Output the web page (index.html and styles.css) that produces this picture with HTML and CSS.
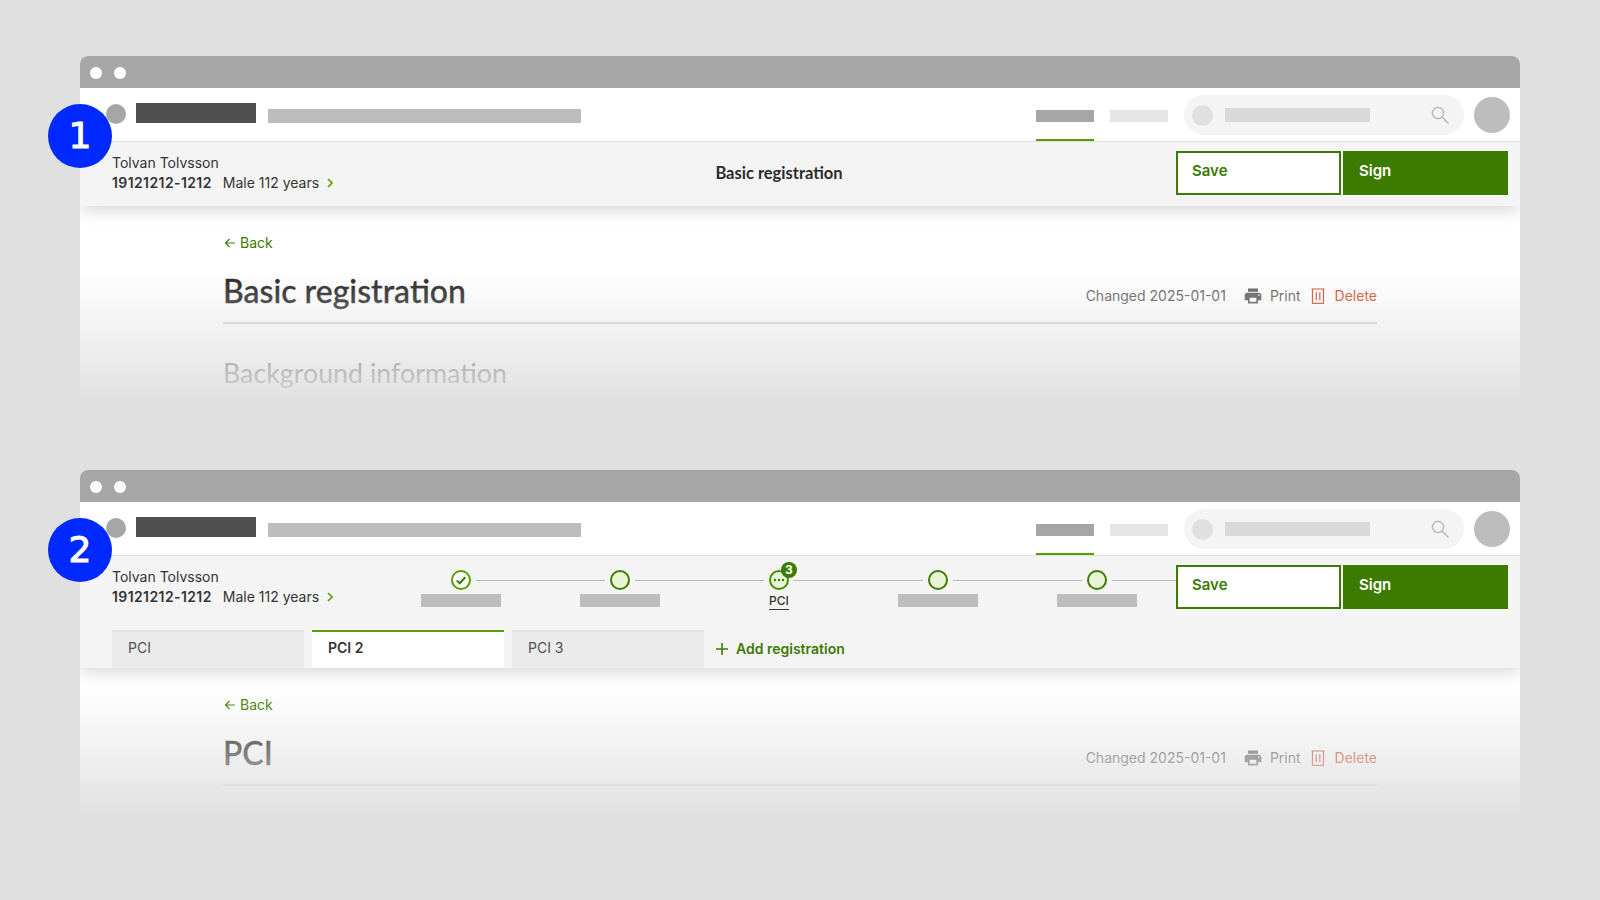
FILE: index.html
```html
<!DOCTYPE html>
<html lang="en">
<head>
    <meta charset="UTF-8">
    <title>Registration header variants</title>
    <link rel="stylesheet" href="styles.css">
</head>
<body>
    <!-- Variant 1: simple registration -->
    <section class="window">
        <div class="number">1</div>
        <div class="titlebar"><span class="dot"></span><span class="dot"></span></div>
        <nav class="nav">
            <div class="nav-left">
                <span class="nav-circle"></span>
                <span class="nav-logo"></span>
                <span class="nav-product"></span>
            </div>
            <div class="nav-right">
                <div class="nav-tab active"><span></span></div>
                <div class="nav-tab"><span></span></div>
                <div class="search">
                    <span class="search-circle"></span>
                    <span class="search-bar"></span>
                    <svg class="search-icon" viewBox="0 0 20 20" width="20" height="20"><circle cx="8" cy="8" r="5.6"/><path d="M12 12l6.5 6.5"/></svg>
                </div>
                <span class="avatar"></span>
            </div>
        </nav>
        <header class="bar">
            <div class="row">
                <div class="patient">
                    <div>Tolvan Tolvsson</div>
                    <div class="patient-line">
                        <strong>19121212-1212</strong>
                        <span>Male 112 years</span>
                        <svg class="chevron" viewBox="0 0 6 10" width="6" height="10"><path d="M1 1l4 4-4 4"/></svg>
                    </div>
                </div>
                <div class="bar-main"><div class="bar-title">Basic registration</div></div>
                <div class="actions">
                    <button class="btn btn-save">Save</button>
                    <button class="btn btn-sign">Sign</button>
                </div>
            </div>
        </header>
        <main class="content">
            <a class="back"><svg viewBox="0 0 12 12" width="12" height="12"><path d="M11 6H1.5M5.5 2L1.5 6l4 4"/></svg>Back</a>
            <div class="page-head">
                <h1>Basic registration</h1>
                <div class="meta">
                    <span class="changed">Changed 2025-01-01</span>
                    <a class="print"><svg viewBox="0 0 24 24" width="20" height="20"><path d="M19 8H5c-1.66 0-3 1.34-3 3v6h4v4h12v-4h4v-6c0-1.66-1.34-3-3-3zm-3 11H8v-5h8v5zm3-7c-.55 0-1-.45-1-1s.45-1 1-1 1 .45 1 1-.45 1-1 1zm-1-9H6v4h12V3z"/></svg>Print</a>
                    <a class="delete"><svg viewBox="0 0 14 16" width="14" height="16"><path d="M.5 1h13M1.5 1h11v14.3h-11zM5.2 4.2v8M8.8 4.2v8"/></svg>Delete</a>
                </div>
            </div>
            <h2>Background information</h2>
            <div class="fade fade-tall"></div>
        </main>
    </section>

    <!-- Variant 2: stepper and tabs -->
    <section class="window">
        <div class="number">2</div>
        <div class="titlebar"><span class="dot"></span><span class="dot"></span></div>
        <nav class="nav">
            <div class="nav-left">
                <span class="nav-circle"></span>
                <span class="nav-logo"></span>
                <span class="nav-product"></span>
            </div>
            <div class="nav-right">
                <div class="nav-tab active"><span></span></div>
                <div class="nav-tab"><span></span></div>
                <div class="search">
                    <span class="search-circle"></span>
                    <span class="search-bar"></span>
                    <svg class="search-icon" viewBox="0 0 20 20" width="20" height="20"><circle cx="8" cy="8" r="5.6"/><path d="M12 12l6.5 6.5"/></svg>
                </div>
                <span class="avatar"></span>
            </div>
        </nav>
        <header class="bar">
            <div class="row">
                <div class="patient">
                    <div>Tolvan Tolvsson</div>
                    <div class="patient-line">
                        <strong>19121212-1212</strong>
                        <span>Male 112 years</span>
                        <svg class="chevron" viewBox="0 0 6 10" width="6" height="10"><path d="M1 1l4 4-4 4"/></svg>
                    </div>
                </div>
                <div class="bar-main stepper">
                    <div class="step">
                        <svg class="step-icon" viewBox="0 0 20 20" width="20" height="20"><circle class="ring-done" cx="10" cy="10" r="9"/><path class="tick" d="M5.8 10.4l2.9 2.9 5.6-6"/></svg>
                        <span class="step-bar"></span>
                    </div>
                    <div class="step">
                        <svg class="step-icon" viewBox="0 0 20 20" width="20" height="20"><circle class="ring" cx="10" cy="10" r="9"/></svg>
                        <span class="step-bar"></span>
                    </div>
                    <div class="step">
                        <svg class="step-icon" viewBox="0 0 20 20" width="20" height="20"><circle class="ring-current" cx="10" cy="10" r="9"/><circle class="pip" cx="6" cy="10" r="1.2"/><circle class="pip" cx="10" cy="10" r="1.2"/><circle class="pip" cx="14" cy="10" r="1.2"/></svg>
                        <span class="step-count">3</span>
                        <span class="step-label">PCI</span>
                    </div>
                    <div class="step">
                        <svg class="step-icon" viewBox="0 0 20 20" width="20" height="20"><circle class="ring" cx="10" cy="10" r="9"/></svg>
                        <span class="step-bar"></span>
                    </div>
                    <div class="step">
                        <svg class="step-icon" viewBox="0 0 20 20" width="20" height="20"><circle class="ring" cx="10" cy="10" r="9"/></svg>
                        <span class="step-bar"></span>
                    </div>
                </div>
                <div class="actions">
                    <button class="btn btn-save">Save</button>
                    <button class="btn btn-sign">Sign</button>
                </div>
            </div>
            <div class="tabs">
                <a class="tab">PCI</a>
                <a class="tab selected">PCI 2</a>
                <a class="tab">PCI 3</a>
                <a class="add"><svg viewBox="0 0 12 12" width="12" height="12"><path d="M6 0v12M0 6h12"/></svg>Add registration</a>
            </div>
        </header>
        <main class="content">
            <a class="back"><svg viewBox="0 0 12 12" width="12" height="12"><path d="M11 6H1.5M5.5 2L1.5 6l4 4"/></svg>Back</a>
            <div class="page-head">
                <h1>PCI</h1>
                <div class="meta">
                    <span class="changed">Changed 2025-01-01</span>
                    <a class="print"><svg viewBox="0 0 24 24" width="20" height="20"><path d="M19 8H5c-1.66 0-3 1.34-3 3v6h4v4h12v-4h4v-6c0-1.66-1.34-3-3-3zm-3 11H8v-5h8v5zm3-7c-.55 0-1-.45-1-1s.45-1 1-1 1 .45 1 1-.45 1-1 1zm-1-9H6v4h12V3z"/></svg>Print</a>
                    <a class="delete"><svg viewBox="0 0 14 16" width="14" height="16"><path d="M.5 1h13M1.5 1h11v14.3h-11zM5.2 4.2v8M8.8 4.2v8"/></svg>Delete</a>
                </div>
            </div>
            <div class="fade fade-short"></div>
        </main>
    </section>
</body>
</html>
```

FILE: styles.css
```css
* {
    box-sizing: border-box;
}
body {
    margin: 0;
    height: 900px;
    padding: 56px 80px 0;
    background: #e0e0e0;
    font-family: Inter, "Liberation Sans", sans-serif;
    font-size: 14px;
    line-height: 20px;
    color: #333;
    display: flex;
    flex-direction: column;
    gap: 64px;
    overflow: hidden;
}
.window {
    position: relative;
    height: 350px;
    display: flex;
    flex-direction: column;
    background: #fff;
    border-radius: 8px 8px 0 0;
}
.number {
    position: absolute;
    left: -32px;
    top: 48px;
    z-index: 5;
    width: 64px;
    height: 64px;
    border-radius: 50%;
    background: #0029ff;
    color: #fff;
    font-family: "DejaVu Sans", sans-serif;
    font-size: 36px;
    font-weight: 400;
    line-height: 64px;
    text-align: center;
    -webkit-text-stroke: 1px #fff;
}

/* Window chrome */
.titlebar {
    height: 32px;
    flex: none;
    display: flex;
    align-items: center;
    gap: 12px;
    padding: 2px 10px 0;
    background: #a6a6a6;
    border-radius: 8px 8px 0 0;
}
.dot {
    width: 12px;
    height: 12px;
    border-radius: 50%;
    background: #fff;
}

/* Top navigation */
.nav {
    position: relative;
    z-index: 3;
    height: 54px;
    flex: none;
    display: flex;
    justify-content: space-between;
    background: #fff;
    border-bottom: 1px solid #e0e0e0;
}
.nav-left {
    display: flex;
    align-items: flex-end;
    height: 35px;
    padding-left: 26px;
}
.nav-circle {
    width: 20px;
    height: 20px;
    margin-bottom: -1px;
    border-radius: 50%;
    background: #a6a6a6;
}
.nav-logo {
    width: 120px;
    height: 20px;
    margin-left: 10px;
    background: #4f4f4f;
}
.nav-product {
    width: 313px;
    height: 14px;
    margin-left: 12px;
    background: #bdbdbd;
}
.nav-right {
    display: flex;
    align-items: center;
    padding-right: 10px;
}
.nav-tab {
    align-self: stretch;
    width: 58px;
    margin-right: 16px;
    padding-top: 22px;
    border-bottom: 2px solid transparent;
}
.nav-tab span {
    display: block;
    height: 12px;
    background: #e5e5e5;
}
.nav-tab.active {
    border-bottom-color: #5a9e00;
}
.nav-tab.active span {
    background: #a6a6a6;
}
.search {
    width: 280px;
    height: 40px;
    margin-top: 1px;
    display: flex;
    align-items: center;
    padding: 0 14px 0 8px;
    border-radius: 20px;
    background: #f4f4f4;
}
.search-circle {
    width: 21px;
    height: 21px;
    border-radius: 50%;
    background: #e0e0e0;
}
.search-bar {
    width: 145px;
    height: 14px;
    margin-left: 12px;
    background: #d9d9d9;
}
.search-icon {
    margin-left: auto;
    fill: none;
    stroke: #bdbdbd;
    stroke-width: 1.6;
}
.avatar {
    width: 36px;
    height: 36px;
    margin-left: 10px;
    border-radius: 50%;
    background: #bdbdbd;
}

/* Patient bar */
.bar {
    position: relative;
    z-index: 2;
    flex: none;
    padding: 9px 12px 0 32px;
    background: #f4f4f4;
    box-shadow: 0 4px 16px rgba(0, 0, 0, 0.16);
    clip-path: inset(0 0 -40px 0);
}
.row {
    display: flex;
    padding-bottom: 11px;
}
.patient {
    width: 270px;
    flex: none;
    padding-top: 2px;
}
.patient-line {
    display: flex;
    align-items: center;
}
.patient-line strong {
    font-weight: 600;
    letter-spacing: 0.4px;
    margin-right: 11px;
}
.chevron {
    margin-left: 8px;
    fill: none;
    stroke: #5a9e00;
    stroke-width: 1.6;
}
.bar-main {
    flex: 1;
    display: flex;
    justify-content: center;
    align-items: center;
}
.bar-title {
    font-family: Lato, sans-serif;
    font-size: 16.5px;
    font-weight: 700;
    color: #2b2b2b;
}
.actions {
    flex: none;
    display: flex;
    gap: 2px;
}
.btn {
    width: 165px;
    height: 44px;
    padding: 0 14px 6px;
    border: 2px solid #3d7a00;
    border-radius: 0;
    font-family: Inter, sans-serif;
    font-size: 15px;
    font-weight: 600;
    text-align: left;
}
.btn-save {
    background: #fff;
    color: #3d7a00;
}
.btn-sign {
    background: #3d7a00;
    color: #fff;
}

/* Stepper */
.stepper {
    align-items: flex-start;
    justify-content: stretch;
}
.step {
    position: relative;
    flex: 1;
    display: flex;
    flex-direction: column;
    align-items: center;
    padding-top: 5px;
}
.step::before {
    content: "";
    position: absolute;
    top: 15px;
    left: calc(50% + 15px);
    right: calc(-50% + 15px);
    height: 1px;
    background: #b8b8b8;
}
.step:last-child::before {
    right: 0;
}
.step-icon {
    display: block;
    overflow: visible;
}
.step-icon circle {
    stroke-width: 2;
}
.ring {
    fill: #e7f5d6;
    stroke: #3d7a00;
}
.ring-done {
    fill: #fff;
    stroke: #5a9e00;
}
.ring-current {
    fill: #e7f5d6;
    stroke: #4a8a00;
}
.tick {
    fill: none;
    stroke: #3d7a00;
    stroke-width: 2;
}
.step-icon .pip {
    fill: #3d7a00;
    stroke: none;
}
.step-bar {
    width: 80px;
    height: 13px;
    margin-top: 4px;
    background: #bdbdbd;
}
.step-label {
    margin: 3px 0 -1px;
    font-size: 12px;
    line-height: 16px;
    font-weight: 500;
    border-bottom: 1px solid #333;
}
.step-count {
    position: absolute;
    top: -3px;
    left: calc(50% + 2px);
    width: 16px;
    height: 16px;
    border-radius: 50%;
    background: #3d7a00;
    color: #fff;
    font-size: 12px;
    font-weight: 700;
    line-height: 16px;
    text-align: center;
}

/* Registration tabs */
.tabs {
    display: flex;
    align-items: stretch;
    gap: 8px;
    height: 38px;
    margin-top: 10px;
}
.tab {
    width: 192px;
    padding: 6px 16px 0;
    border-top: 2px solid #e3e3e3;
    background: #ebebeb;
    color: #4f4f4f;
}
.tab.selected {
    border-top-color: #5a9e00;
    background: #fff;
    color: #333;
    font-weight: 600;
}
.add {
    display: flex;
    align-items: center;
    gap: 8px;
    margin-left: 4px;
    color: #3d7a00;
    font-weight: 600;
}
.add svg {
    fill: none;
    stroke: #3d7a00;
    stroke-width: 1.6;
}

/* Page content, fades out at the bottom */
.content {
    position: relative;
    flex: 1;
    overflow: hidden;
    padding: 27px 143px 0 143px;
}
.back {
    display: flex;
    align-items: center;
    gap: 4px;
    padding-left: 1px;
    color: #3d7a00;
}
.back svg {
    fill: none;
    stroke: #3d7a00;
    stroke-width: 1.2;
}
.page-head {
    display: flex;
    justify-content: space-between;
    align-items: flex-end;
    margin-top: 16px;
    height: 55px;
    padding-bottom: 11px;
    border-bottom: 2px solid #d9d9d9;
}
h1 {
    margin: 0;
    font-family: Lato, sans-serif;
    font-size: 32px;
    font-weight: 500;
    line-height: 40px;
    color: #222;
    -webkit-text-stroke: 0.3px #222;
}
h2 {
    margin: 32px 0 0;
    font-family: Lato, sans-serif;
    font-size: 26.8px;
    font-weight: 400;
    line-height: 34px;
    color: #4f4f4f;
}
.meta {
    display: flex;
    align-items: center;
    margin-bottom: 5px;
    color: #5c5c5c;
}
.print,
.delete {
    display: flex;
    align-items: center;
}
.print {
    margin-left: 17px;
    gap: 7px;
}
.print svg {
    fill: #5c5c5c;
}
.delete {
    margin-left: 10px;
    gap: 10px;
    color: #d4492a;
}
.delete svg {
    fill: none;
    stroke: #d4492a;
    stroke-width: 1.2;
}
.fade {
    position: absolute;
    left: 0;
    right: 0;
    bottom: 0;
    background: linear-gradient(rgba(224, 224, 224, 0), #e0e0e0);
}
.fade-tall {
    height: 136px;
}
.fade-short {
    height: 130px;
}
```
